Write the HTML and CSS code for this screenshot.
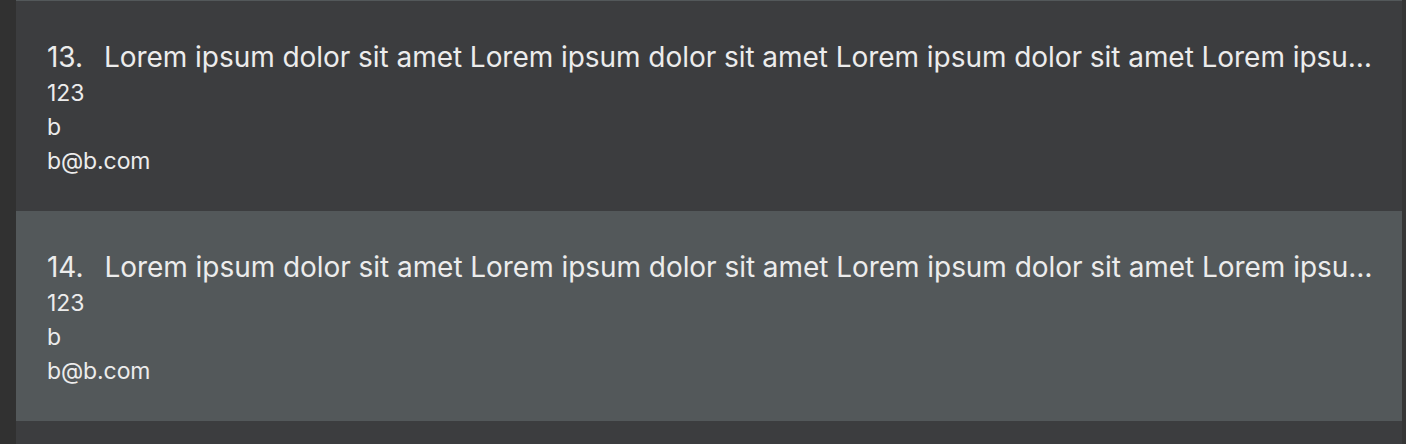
FILE: index.html
```html
<!DOCTYPE html>
<html>
<head>
<meta charset="utf-8">
<link rel="stylesheet" href="styles.css">
</head>
<body>
<div class="app">
  <div class="gutter"></div>
  <div class="list">
    <div class="card even peek"></div>
    <div class="card odd">
      <div class="title"><span class="num">13.</span><span class="name">Lorem ipsum dolor sit amet Lorem ipsum dolor sit amet Lorem ipsum dolor sit amet Lorem ipsum dolor sit amet</span></div>
      <div class="line">123</div>
      <div class="line">b</div>
      <div class="line">b@b.com</div>
    </div>
    <div class="card even">
      <div class="title"><span class="num">14.</span><span class="name">Lorem ipsum dolor sit amet Lorem ipsum dolor sit amet Lorem ipsum dolor sit amet Lorem ipsum dolor sit amet</span></div>
      <div class="line">123</div>
      <div class="line">b</div>
      <div class="line">b@b.com</div>
    </div>
  </div>
  <div class="track"></div>
</div>
</body>
</html>
```

FILE: styles.css
```css
html, body {
  margin: 0;
  padding: 0;
  height: 100%;
}
body {
  background: #313131;
  font-family: Inter, "Noto Sans", "Liberation Sans", sans-serif;
  color: #ececec;
  overflow: hidden;
}
.app {
  display: flex;
  height: 444px;
}
.gutter {
  width: 16px;
  background: #313131;
  flex: none;
}
.track {
  width: 4px;
  background: #363636;
  flex: none;
}
.list {
  flex: 1;
  min-width: 0;
  background: #3c3d3f;
  display: flex;
  flex-direction: column;
}
.card {
  height: 210px;
  box-sizing: border-box;
  padding: 38px 24px 0 31px;
  flex: none;
}
.card.peek {
  height: 1px;
  padding: 0;
}
.odd { background: #3c3d3f; }
.even { background: #53585a; }
.title {
  display: flex;
  gap: 21px;
  font-size: 28px;
  line-height: 37px;
  letter-spacing: -0.05px;
  white-space: nowrap;
}
.num { flex: none; }
.name {
  overflow: hidden;
  text-overflow: ellipsis;
  min-width: 0;
}
.line {
  font-size: 23px;
  line-height: 34px;
  letter-spacing: -0.1px;
}
```
